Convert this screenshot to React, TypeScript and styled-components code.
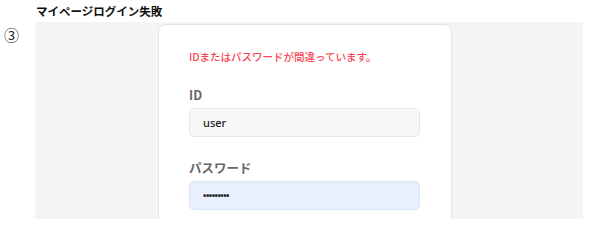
import React from 'react'
import styled, { createGlobalStyle } from 'styled-components'

const GlobalStyle = createGlobalStyle`
  html, body {
    margin: 0;
    padding: 0;
    background: #ffffff;
    font-family: "Noto Sans CJK JP", "Noto Sans", sans-serif;
  }
`

const Page = styled.div`
  width: 594px;
  height: 245px;
  overflow: hidden;
  background: #ffffff;
`

const Heading = styled.div`
  padding: 2px 0 0 36px;
  height: 20px;
  font-size: 11.5px;
  font-weight: 700;
  color: #111;
  line-height: 18px;
`

const StepRow = styled.div`
  display: flex;
  align-items: flex-start;
`

const StepNumber = styled.div`
  width: 35px;
  padding: 3px 0 0 4px;
  box-sizing: border-box;
  font-family: "Noto Sans CJK JP", sans-serif;
  font-size: 15px;
  line-height: 20px;
  color: #222;
`

const Panel = styled.div`
  width: 548px;
  height: 197px;
  background: #f4f4f4;
  overflow: hidden;
  display: flex;
  padding-left: 123px;
  padding-top: 2px;
  box-sizing: border-box;
`

const Card = styled.div`
  width: 294px;
  height: 240px;
  background: #ffffff;
  border: 1px solid #e3e3e3;
  border-radius: 8px;
  box-sizing: border-box;
  padding: 24px 31px 0 30px;
`

const ErrorText = styled.div`
  font-size: 10.5px;
  font-weight: 500;
  line-height: 16px;
  color: #fa4554;
  font-family: "Noto Sans CJK JP", sans-serif;
  margin-bottom: 21px;
`

const Label = styled.div`
  font-size: 12.5px;
  font-weight: 700;
  color: #666;
  line-height: 18px;
  margin-bottom: 4px;
`

const Field = styled.div<{ $filled?: boolean }>`
  height: 29px;
  box-sizing: border-box;
  border: 1px solid ${p => (p.$filled ? '#dbe4f3' : '#e6e6e6')};
  background: ${p => (p.$filled ? '#e8f0fd' : '#f7f7f7')};
  border-radius: 5px;
  padding: 0 13px;
  display: flex;
  align-items: center;
  font-size: 11px;
  font-weight: 500;
  color: #222;
  font-family: "Noto Sans", sans-serif;
  margin-bottom: ${p => (p.$filled ? '0' : '22px')};
`

const Dots = styled.span`
  font-size: 9px;
  letter-spacing: -0.5px;
  font-weight: 700;
  color: #222;
`

export default function App() {
  return (
    <Page>
      <GlobalStyle />
      <Heading>マイページログイン失敗</Heading>
      <StepRow>
        <StepNumber>③</StepNumber>
        <Panel>
          <Card>
            <ErrorText>IDまたはパスワードが間違っています。</ErrorText>
            <Label>ID</Label>
            <Field>user</Field>
            <Label>パスワード</Label>
            <Field $filled>
              <Dots>•••••••••</Dots>
            </Field>
          </Card>
        </Panel>
      </StepRow>
    </Page>
  )
}
